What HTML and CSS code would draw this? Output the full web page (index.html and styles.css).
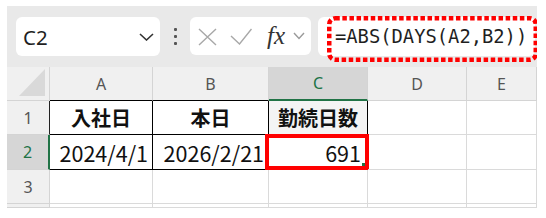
FILE: index.html
```html
<!DOCTYPE html>
<html lang="ja">
<head>
<meta charset="utf-8">
<link rel="stylesheet" href="styles.css">
</head>
<body>
<div class="app">
  <div class="toolbar">
    <div class="namebox">
      <span class="ref">C2</span>
      <svg class="chev" width="15" height="8" viewBox="0 0 15 8"><polyline points="1,1 7.5,7 14,1" fill="none" stroke="#333" stroke-width="1.6"/></svg>
    </div>
    <div class="grip"><i></i><i></i><i></i></div>
    <div class="fnbox">
      <svg class="ico-x" width="19" height="18" viewBox="0 0 19 18"><path d="M1 1 L18 17 M18 1 L1 17" stroke="#a8a8a8" stroke-width="1.4" fill="none"/></svg>
      <svg class="ico-ok" width="22" height="17" viewBox="0 0 22 17"><polyline points="1,8 9.5,16 21.5,1" fill="none" stroke="#a8a8a8" stroke-width="1.4"/></svg>
      <span class="fx">fx</span>
      <svg class="ico-chev" width="12" height="8" viewBox="0 0 12 8"><polyline points="1,1 6,6.5 11,1" fill="none" stroke="#9a9a9a" stroke-width="1.4"/></svg>
    </div>
    <div class="formula">
      <span>=ABS(DAYS(A2,B2))</span>
      <svg class="hl" width="211" height="46" viewBox="0 0 211 46"><rect x="2.25" y="2.25" width="206.5" height="41.5" rx="6" fill="none" stroke="#ff0000" stroke-width="4.5" stroke-dasharray="4.5 2.6"/></svg>
    </div>
  </div>
  <div class="sheet">
    <div class="hd corner"><svg width="26" height="27" viewBox="0 0 26 27"><polygon points="0,27 26,27 26,0" fill="#d9d9d9"/></svg></div>
    <div class="hd col tb">A</div>
    <div class="hd col tb">B</div>
    <div class="hd col tb act-col">C</div>
    <div class="hd col">D</div>
    <div class="hd col">E</div>

    <div class="hd row rb">1</div>
    <div class="c t head">入社日</div>
    <div class="c t head">本日</div>
    <div class="c t head shade">勤続日数</div>
    <div class="c"></div>
    <div class="c"></div>

    <div class="hd row act-row">2</div>
    <div class="c t num">2024/4/1</div>
    <div class="c t num">2026/2/21</div>
    <div class="c t num active">691<span class="box"><i class="handle"></i></span></div>
    <div class="c"></div>
    <div class="c"></div>

    <div class="hd row">3</div>
    <div class="c"></div>
    <div class="c"></div>
    <div class="c"></div>
    <div class="c"></div>
    <div class="c"></div>

    <div class="hd row"></div>
    <div class="c"></div>
    <div class="c"></div>
    <div class="c"></div>
    <div class="c"></div>
    <div class="c"></div>
  </div>
</div>
</body>
</html>
```

FILE: styles.css
```css
html, body {
  margin: 0;
  padding: 0;
  background: #ffffff;
}

.app {
  margin: 6px 9px 10px 7px;
  width: 530px;
  height: 202px;
  background: #e9e9e9;
  overflow: hidden;
  display: flex;
  flex-direction: column;
}

.toolbar {
  height: 61px;
  flex: none;
  box-sizing: border-box;
  padding: 11px 0 0 9px;
  display: flex;
  align-items: flex-start;
}

.namebox {
  width: 144px;
  height: 39px;
  box-sizing: border-box;
  background: #ffffff;
  border-radius: 6px;
  display: flex;
  align-items: center;
  justify-content: space-between;
  padding: 0 6px 0 7px;
}

.ref {
  font-family: "Noto Sans", "Open Sans", sans-serif;
  font-size: 20.5px;
  color: #1f1f1f;
}

.grip {
  width: 30px;
  display: flex;
  flex-direction: column;
  align-items: center;
  gap: 4px;
  padding-top: 11px;
}

.grip i {
  display: block;
  width: 3px;
  height: 3px;
  background: #555555;
  border-radius: 1px;
}

.fnbox {
  width: 121px;
  height: 38px;
  box-sizing: border-box;
  background: #ffffff;
  border-radius: 6px;
  display: flex;
  align-items: center;
  padding-left: 8px;
}

.ico-x { margin-top: 1px; }
.ico-ok { margin-left: 13px; margin-top: 1px; }

.fx {
  margin-left: 15px;
  font-family: "Liberation Serif", serif;
  font-style: italic;
  font-size: 25px;
  line-height: 1;
  color: #333333;
  margin-top: -2px;
}

.ico-chev { margin-left: 8px; }

.formula {
  position: relative;
  margin-left: 7px;
  width: 217px;
  height: 39px;
  box-sizing: border-box;
  background: #ffffff;
  border-radius: 6px;
  display: flex;
  align-items: center;
  padding-left: 17px;
  font-family: "DejaVu Sans Mono", monospace;
  font-size: 18.8px;
  color: #1f1f1f;
}

.hl {
  position: absolute;
  left: 9px;
  top: -1px;
}

.sheet {
  flex: none;
  display: grid;
  grid-template-columns: 43px 103px 116px 99px 99px 70px;
  grid-template-rows: 34px 34px 35px 34px 4px;
  background: #ffffff;
}

.sheet > div {
  box-sizing: border-box;
  border-right: 1px solid #dadada;
  border-bottom: 1px solid #dadada;
  display: flex;
  align-items: center;
  position: relative;
}

.hd {
  background: #f0f0f0;
  font-family: "Noto Sans", "Open Sans", sans-serif;
  font-size: 16px;
  color: #555555;
  justify-content: center;
}

.sheet > .hd {
  border-color: #d4d4d4;
}

.corner {
  align-items: flex-end;
  justify-content: flex-end;
  padding: 0 4px 3px 0;
}

.corner svg { display: block; }

.sheet > .tb {
  border-bottom-color: #000000;
}

.sheet > .act-col {
  background: #d6d6d6;
  color: #217346;
  border-bottom: 2px solid #217346;
}

.sheet > .rb {
  border-right-color: #222222;
}

.sheet > .act-row {
  background: #d6d6d6;
  color: #217346;
  border-right: 2px solid #217346;
}

.c {
  font-family: "Noto Sans CJK JP", sans-serif;
  font-size: 20px;
  color: #111111;
  padding: 0 4px;
}

.sheet > .t {
  border-right-color: #000000;
  border-bottom-color: #000000;
}

.head {
  font-weight: 700;
  justify-content: center;
}

.shade {
  background: #f4f4f4;
}

.num {
  justify-content: flex-end;
  font-size: 21.5px;
}

.active {
  padding-right: 6px;
}

.box {
  position: absolute;
  left: -4px;
  top: -1px;
  width: 104px;
  height: 36px;
  box-sizing: border-box;
  border: 4px solid #ff0000;
}

.handle {
  position: absolute;
  right: 0;
  bottom: 0;
  width: 3px;
  height: 3px;
  background: #217346;
}
```
